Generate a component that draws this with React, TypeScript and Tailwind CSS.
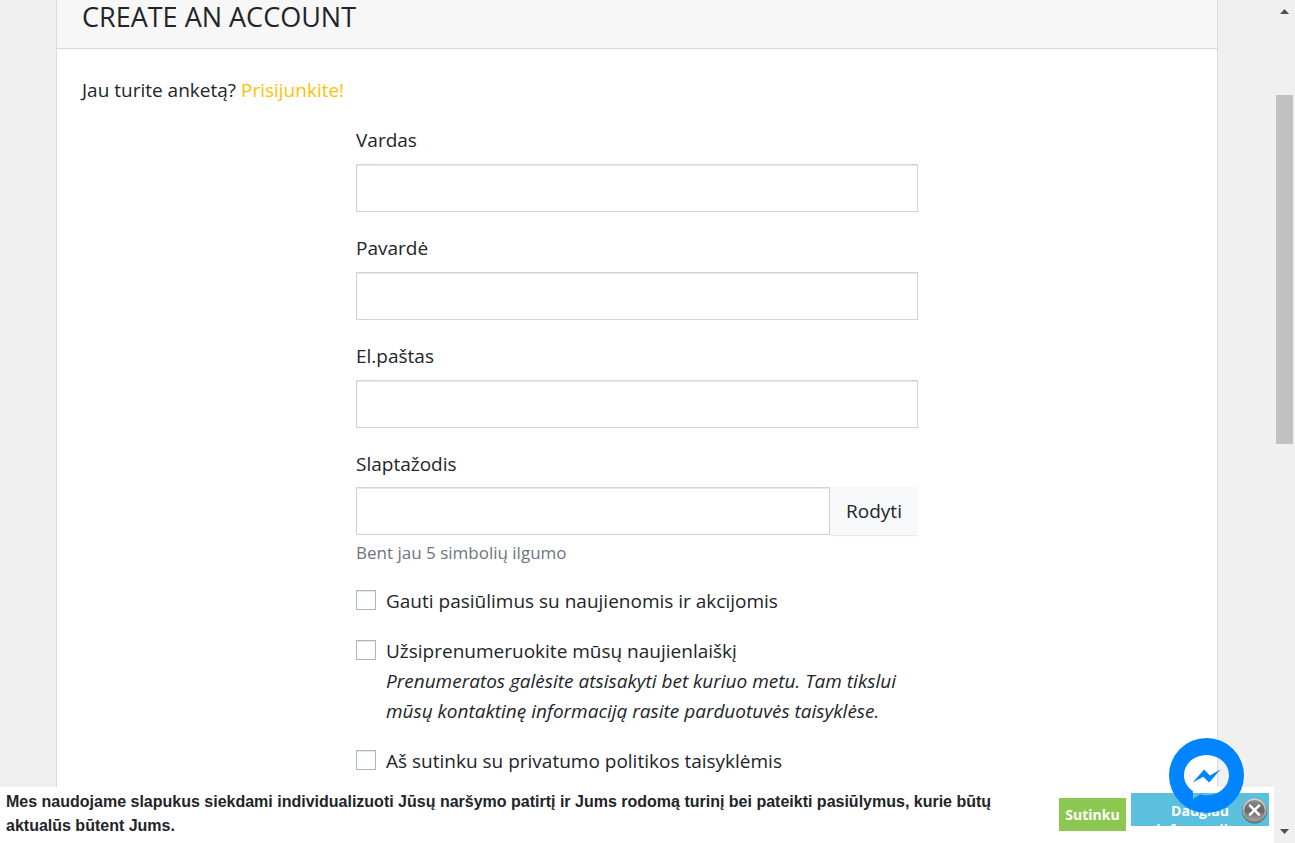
import { useState } from "react";

const inputClass =
  "block h-12 w-full min-w-0 rounded-none border border-[#ced4da] bg-white px-4 text-[19px] shadow-[inset_0_1px_1px_rgba(0,0,0,0.1)] outline-none focus:border-[#80bdff]";

function Field({ id, label, type = "text" }: { id: string; label: string; type?: string }) {
  return (
    <div className="mb-[21px]">
      <label htmlFor={id} className="mb-[9px] block">
        {label}
      </label>
      <input id={id} name={id} type={type} className={inputClass} />
    </div>
  );
}

function Check({ id, label, note }: { id: string; label: string; note?: string }) {
  return (
    <div className="mb-5 flex items-start gap-[10px]">
      <input
        id={id}
        type="checkbox"
        className="mt-1 size-5 shrink-0 appearance-none border border-[#adb5bd] bg-white shadow-[inset_0_1px_1px_rgba(0,0,0,0.1)] checked:bg-[#ffc107]"
      />
      <label htmlFor={id}>
        {label}
        {note && <em className="block">{note}</em>}
      </label>
    </div>
  );
}

function PageScrollbar() {
  return (
    <div aria-hidden="true" className="flex w-[21px] shrink-0 flex-col items-center bg-[#f0f0f0] py-[9px]">
      <svg width="9" height="5" viewBox="0 0 9 5" fill="#505050">
        <path d="M4.5 0 9 5H0z" />
      </svg>
      <div className="mt-[81px] h-[349px] w-[17px] bg-[#c1c1c1]" />
      <svg className="mt-auto" width="9" height="5" viewBox="0 0 9 5" fill="#505050">
        <path d="M0 0h9L4.5 5z" />
      </svg>
    </div>
  );
}

function CookieBar() {
  return (
    <div className="absolute inset-x-0 bottom-0 flex h-14 items-start bg-white">
      <p className="min-w-0 flex-1 pt-[3px] pr-10 pl-[6px] font-['Liberation_Sans',Arial,sans-serif] text-base leading-6 font-bold">
        Mes naudojame slapukus siekdami individualizuoti Jūsų naršymo patirtį ir Jums rodomą turinį bei pateikti
        pasiūlymus, kurie būtų aktualūs būtent Jums.
      </p>
      <button type="button" className="mt-[11px] mr-[5px] h-[33px] w-[67px] bg-[#8cc751] text-sm leading-5 font-bold text-white">
        Sutinku
      </button>
      <div className="relative mt-[6px] mr-[5px] w-[138px]">
        <a
          href="#info"
          className="block h-[33px] overflow-hidden bg-[#5bc0de] px-5 pt-2 text-center text-sm leading-[19px] font-bold text-white"
        >
          Daugiau informacijos
        </a>
        <button type="button" aria-label="Uždaryti" className="absolute top-1 right-px size-[27px]">
          <svg viewBox="0 0 27 27">
            <defs>
              <linearGradient id="close-ring" x1="0" y1="0" x2="0" y2="1">
                <stop offset="0" stopColor="#d8d8d8" />
                <stop offset="1" stopColor="#8a8a8a" />
              </linearGradient>
              <linearGradient id="close-fill" x1="0" y1="0" x2="0" y2="1">
                <stop offset="0" stopColor="#8f8f8f" />
                <stop offset="0.5" stopColor="#666" />
                <stop offset="1" stopColor="#a0a0a0" />
              </linearGradient>
            </defs>
            <circle cx="13.5" cy="13.8" r="12.6" fill="#666" />
            <circle cx="13.5" cy="13.2" r="12" fill="url(#close-ring)" />
            <circle cx="13.5" cy="13.2" r="10.2" fill="url(#close-fill)" />
            <path d="m9 8.700 9 9m0-9-9 9" stroke="#fff" strokeWidth="2.6" strokeLinecap="round" />
          </svg>
        </button>
      </div>
    </div>
  );
}

function MessengerButton() {
  return (
    <button type="button" aria-label="Messenger" className="absolute right-[30px] bottom-[30px] size-[75px]">
      <svg viewBox="0 0 75 75" fill="#0084ff">
        <path
          fillRule="evenodd"
          d="M37.5 0a37.500 37.500 0 1 0 0 75a37.500 37.500 0 1 0 0-75zM37.500 17C25.100 17 15 25.900 15 37.200c0 6.400 3.300 12.100 8.900 15.800V61l7.300-4.400c2 .5 4.100.8 6.300.8 12.400 0 22.500-9 22.500-20.200S49.900 17 37.500 17z"
        />
        <path d="M35.200 31.500 23.700 44.500l10.600-5.800 5.800 5.800L51.500 31.500l-10.600 5.900z" />
      </svg>
    </button>
  );
}

export default function App() {
  const [visible, setVisible] = useState(false);
  return (
    <div className="flex h-screen overflow-hidden bg-[#f0f0f0] font-['Open_Sans','Noto_Sans',sans-serif] text-[19px] leading-[30px] text-[#212529]">
      <div className="relative min-w-0 flex-1 overflow-hidden">
        <main className="mx-14 min-h-full border-x border-[#dcdcdc] bg-white">
          <header className="border-b border-[#d8d8d8] bg-[#f7f7f7] px-[25px] pb-[14px]">
            <h1 className="text-[27px] leading-[34px] uppercase">Create an account</h1>
          </header>
          <div className="px-[25px] pt-[26px]">
            <p className="mb-5">
              Jau turite anketą?{" "}
              <a href="#login" className="text-[#ffc107]">
                Prisijunkite!
              </a>
            </p>
            <form className="mx-auto max-w-[562px]">
              <Field id="firstname" label="Vardas" />
              <Field id="lastname" label="Pavardė" />
              <Field id="email" label="El.paštas" type="email" />
              <div className="mb-5">
                <label htmlFor="password" className="mb-2 block">
                  Slaptažodis
                </label>
                <div className="flex">
                  <input id="password" type={visible ? "text" : "password"} className={inputClass} />
                  <button
                    type="button"
                    onClick={() => setVisible(!visible)}
                    className="w-[88px] shrink-0 bg-[#f8f9fa] shadow-[0_1px_1px_rgba(0,0,0,0.08)]"
                  >
                    Rodyti
                  </button>
                </div>
                <p className="mt-1 text-[17px] leading-[27px] text-[#6c757d]">Bent jau 5 simbolių ilgumo</p>
              </div>
              <Check id="offers" label="Gauti pasiūlimus su naujienomis ir akcijomis" />
              <Check
                id="newsletter"
                label="Užsiprenumeruokite mūsų naujienlaiškį"
                note="Prenumeratos galėsite atsisakyti bet kuriuo metu. Tam tikslui mūsų kontaktinę informaciją rasite parduotuvės taisyklėse."
              />
              <Check id="privacy" label="Aš sutinku su privatumo politikos taisyklėmis" />
            </form>
          </div>
        </main>
        <CookieBar />
        <MessengerButton />
      </div>
      <PageScrollbar />
    </div>
  );
}
